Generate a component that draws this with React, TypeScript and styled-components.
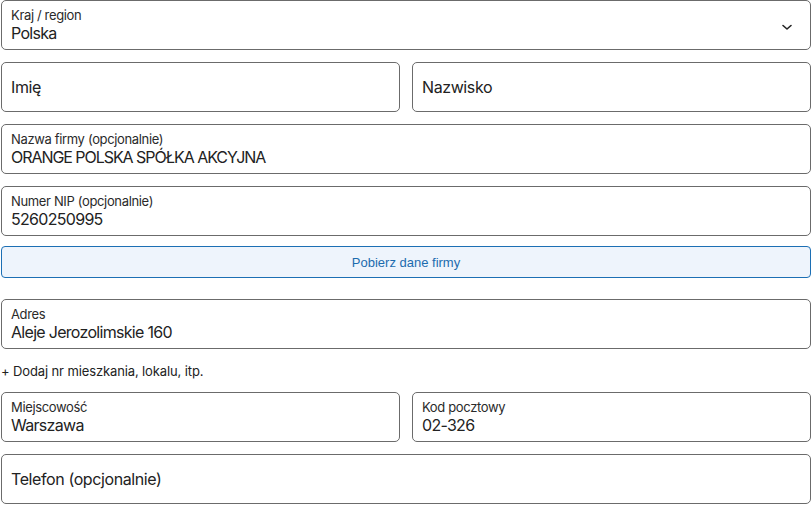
import React from "react";
import styled, { createGlobalStyle } from "styled-components";

const Global = createGlobalStyle`
  html, body { margin: 0; padding: 0; background: #fff; }
  body { font-family: Inter, "Noto Sans", sans-serif; color: #222; }
  * { box-sizing: border-box; }
`;

const Form = styled.div`
  width: 810px;
  margin-left: 1px;
  display: flex;
  flex-direction: column;
`;

const Row = styled.div<{ $mb?: number }>`
  display: flex;
  gap: 12px;
  margin-bottom: ${(p) => (p.$mb ?? 12)}px;
`;

const Field = styled.div<{ $empty?: boolean }>`
  position: relative;
  flex: 1;
  height: 50px;
  border: 1px solid #6b6b6b;
  border-radius: 5px;
  padding: ${(p) => (p.$empty ? "0 9px" : "6px 9px 0")};
  display: flex;
  flex-direction: column;
  justify-content: ${(p) => (p.$empty ? "center" : "flex-start")};
`;

const Label = styled.div`
  font-size: 13px;
  line-height: 16px;
  color: #2a2a2a;
  letter-spacing: -0.35px;
`;

const Value = styled.div<{ $caps?: boolean }>`
  font-size: 16px;
  line-height: 21px;
  color: #222;
  letter-spacing: ${(p) => (p.$caps ? "-1.05px" : "-0.7px")};
`;

const Placeholder = styled.div`
  font-size: 16px;
  line-height: 21px;
  color: #222;
  letter-spacing: -0.4px;
`;

const Chevron = styled.svg`
  position: absolute;
  right: 17px;
  top: 20px;
`;

const FetchButton = styled.button`
  height: 32px;
  width: 100%;
  border: 1px solid #1c6fb4;
  border-radius: 4px;
  background: #eef4fc;
  color: #1c6bae;
  font-family: "Liberation Sans", Arial, sans-serif;
  font-size: 13px;
  margin-bottom: 21px;
  cursor: pointer;
`;

const AddLink = styled.div`
  font-size: 13px;
  letter-spacing: -0.12px;
  color: #222;
  height: 43px;
  display: flex;
  align-items: center;
  margin-top: -12px;
`;

export default function App() {
  return (
    <>
      <Global />
      <Form>
        <Row>
          <Field>
            <Label>Kraj / region</Label>
            <Value>Polska</Value>
            <Chevron width="12" height="12" viewBox="0 0 12 12" fill="none">
              <path d="M2 4.5 L6 8 L10 4.5" stroke="#222" strokeWidth="1.6" strokeLinecap="round" strokeLinejoin="round" />
            </Chevron>
          </Field>
        </Row>
        <Row>
          <Field $empty>
            <Placeholder>Imię</Placeholder>
          </Field>
          <Field $empty>
            <Placeholder>Nazwisko</Placeholder>
          </Field>
        </Row>
        <Row>
          <Field>
            <Label>Nazwa firmy (opcjonalnie)</Label>
            <Value $caps>ORANGE POLSKA SPÓŁKA AKCYJNA</Value>
          </Field>
        </Row>
        <Row $mb={10}>
          <Field>
            <Label>Numer NIP (opcjonalnie)</Label>
            <Value>5260250995</Value>
          </Field>
        </Row>
        <FetchButton>Pobierz dane firmy</FetchButton>
        <Row>
          <Field>
            <Label>Adres</Label>
            <Value>Aleje Jerozolimskie 160</Value>
          </Field>
        </Row>
        <AddLink>+ Dodaj nr mieszkania, lokalu, itp.</AddLink>
        <Row>
          <Field>
            <Label>Miejscowość</Label>
            <Value>Warszawa</Value>
          </Field>
          <Field>
            <Label>Kod pocztowy</Label>
            <Value>02-326</Value>
          </Field>
        </Row>
        <Row>
          <Field $empty>
            <Placeholder>Telefon (opcjonalnie)</Placeholder>
          </Field>
        </Row>
      </Form>
    </>
  );
}
